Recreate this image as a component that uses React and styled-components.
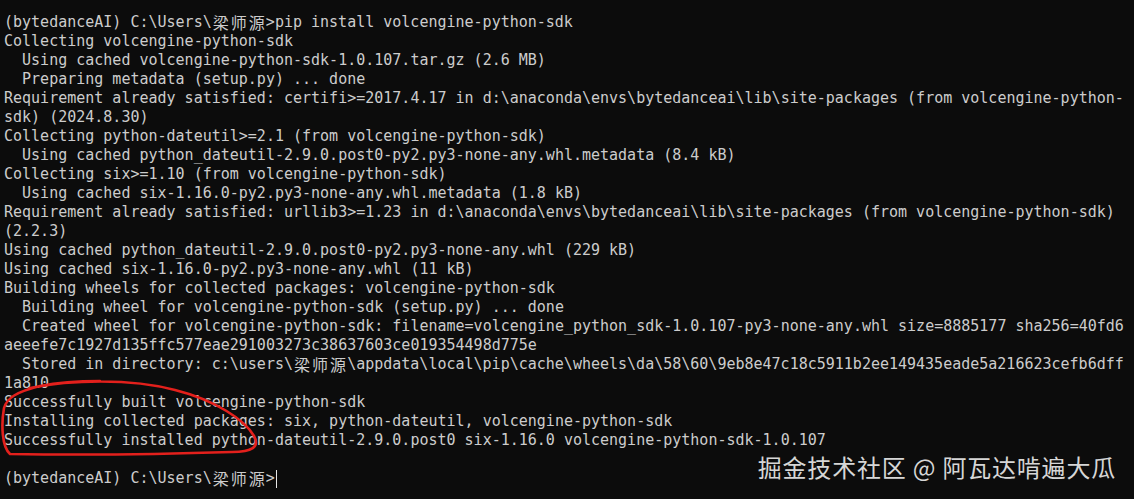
import React from "react";
import styled, { createGlobalStyle } from "styled-components";

const Global = createGlobalStyle`
  html, body { margin: 0; padding: 0; background: #0c0c0c; }
  body { width: 1134px; height: 499px; overflow: hidden; }
`;

const Screen = styled.div`
  position: relative;
  width: 1134px;
  height: 499px;
  box-sizing: border-box;
  padding: 13px 0 0 4px;
  background: #0c0c0c;
  color: #cccccc;
  font-family: "DejaVu Sans Mono", "Liberation Mono", monospace;
  font-size: 15px;
  overflow: hidden;
`;

const Line = styled.div`
  height: 19px;
  line-height: 19px;
  white-space: pre;
`;

const Wide = styled.span`
  display: inline-block;
  width: 18.06px;
  height: 19px;
  line-height: 19px;
  vertical-align: top;
  text-align: center;
  font-family: "Noto Sans CJK SC", sans-serif;
  font-size: 16px;
`;

const Cursor = styled.span`
  display: inline-block;
  width: 1.5px;
  height: 18px;
  margin-top: 1px;
  margin-left: 1px;
  vertical-align: top;
  background: #e6e6e6;
`;

const Watermark = styled.div`
  position: absolute;
  right: 18px;
  top: 451px;
  font-family: "Noto Sans CJK SC", sans-serif;
  font-size: 24px;
  letter-spacing: 0.8px;
  line-height: 32px;
  color: #d6d6d6;
  white-space: pre;
`;

const Annotation = styled.svg`
  position: absolute;
  left: 0;
  top: 0;
  pointer-events: none;
`;

const U = "\u6881\u5e08\u6e90";

const LINES = [
  `(bytedanceAI) C:\\Users\\${U}>pip install volcengine-python-sdk`,
  "Collecting volcengine-python-sdk",
  "  Using cached volcengine-python-sdk-1.0.107.tar.gz (2.6 MB)",
  "  Preparing metadata (setup.py) ... done",
  "Requirement already satisfied: certifi>=2017.4.17 in d:\\anaconda\\envs\\bytedanceai\\lib\\site-packages (from volcengine-python-",
  "sdk) (2024.8.30)",
  "Collecting python-dateutil>=2.1 (from volcengine-python-sdk)",
  "  Using cached python_dateutil-2.9.0.post0-py2.py3-none-any.whl.metadata (8.4 kB)",
  "Collecting six>=1.10 (from volcengine-python-sdk)",
  "  Using cached six-1.16.0-py2.py3-none-any.whl.metadata (1.8 kB)",
  "Requirement already satisfied: urllib3>=1.23 in d:\\anaconda\\envs\\bytedanceai\\lib\\site-packages (from volcengine-python-sdk)",
  "(2.2.3)",
  "Using cached python_dateutil-2.9.0.post0-py2.py3-none-any.whl (229 kB)",
  "Using cached six-1.16.0-py2.py3-none-any.whl (11 kB)",
  "Building wheels for collected packages: volcengine-python-sdk",
  "  Building wheel for volcengine-python-sdk (setup.py) ... done",
  "  Created wheel for volcengine-python-sdk: filename=volcengine_python_sdk-1.0.107-py3-none-any.whl size=8885177 sha256=40fd6",
  "aeeefe7c1927d135ffc577eae291003273c38637603ce019354498d775e",
  `  Stored in directory: c:\\users\\${U}\\appdata\\local\\pip\\cache\\wheels\\da\\58\\60\\9eb8e47c18c5911b2ee149435eade5a216623cefb6dff`,
  "1a810",
  "Successfully built volcengine-python-sdk",
  "Installing collected packages: six, python-dateutil, volcengine-python-sdk",
  "Successfully installed python-dateutil-2.9.0.post0 six-1.16.0 volcengine-python-sdk-1.0.107",
  "",
];

const PROMPT = `(bytedanceAI) C:\\Users\\${U}>`;

function renderText(text) {
  const parts = [];
  let buf = "";
  let k = 0;
  for (const ch of text) {
    if (/[\u3000-\u9fff]/.test(ch)) {
      if (buf) parts.push(buf);
      buf = "";
      parts.push(<Wide key={k++}>{ch}</Wide>);
    } else {
      buf += ch;
    }
  }
  if (buf) parts.push(buf);
  return parts;
}

export default function App() {
  return (
    <>
      <Global />
      <Screen>
        {LINES.map((l, i) => (
          <Line key={i}>{renderText(l)}</Line>
        ))}
        <Line>
          {renderText(PROMPT)}
          <Cursor />
        </Line>
        <Watermark>{"\u6398\u91d1\u6280\u672f\u793e\u533a @ \u963f\u74e6\u8fbe\u5543\u904d\u5927\u74dc"}</Watermark>
        <Annotation width="1134" height="499" viewBox="0 0 1134 499">
          <path
            d="M 30 388 C 70 380, 130 378, 175 390 C 215 400, 245 420, 254 436 C 260 447, 252 452, 232 452 C 170 454, 70 455, 10 454 C 2 447, 1 425, 4 408 C 7 398, 16 392, 40 386 C 60 382, 80 381, 100 381"
            fill="none"
            stroke="#e3201c"
            strokeWidth="2.6"
            strokeLinecap="round"
            strokeLinejoin="round"
          />
        </Annotation>
      </Screen>
    </>
  );
}
